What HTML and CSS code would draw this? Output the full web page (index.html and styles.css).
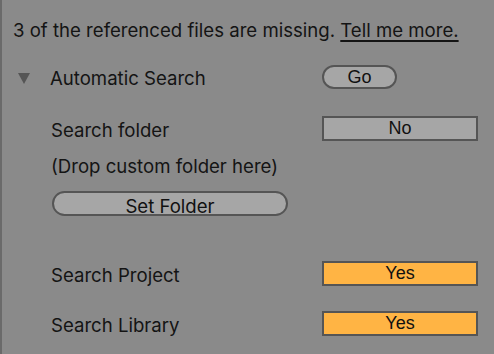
FILE: index.html
```html
<!DOCTYPE html>
<html lang="en">
<head>
    <meta charset="UTF-8">
    <meta name="viewport" content="width=device-width, initial-scale=1.0">
    <title>Missing Files</title>
    <link rel="stylesheet" href="styles.css">
</head>
<body>

    <div class="panel">
        <p class="notice">3 of the referenced files are missing. <a href="#" class="more">Tell me more.</a></p>

        <div class="row head-row">
            <span class="arrow"></span>
            <span class="label">Automatic Search</span>
            <button class="go">Go</button>
        </div>

        <div class="row folder-row">
            <span class="label">Search folder</span>
            <button class="toggle">No</button>
        </div>

        <div class="row drop-row">
            <span class="label">(Drop custom folder here)</span>
        </div>

        <div class="row set-row">
            <button class="set">Set Folder</button>
        </div>

        <div class="row project-row">
            <span class="label">Search Project</span>
            <button class="toggle on">Yes</button>
        </div>

        <div class="row library-row">
            <span class="label">Search Library</span>
            <button class="toggle on">Yes</button>
        </div>
    </div>

</body>
</html>
```
FILE: styles.css
```css
body {
    margin: 0;
    padding: 0;
    background-color: #8a8a8a;
    font-family: Inter, sans-serif;
    color: #141414;
}

.panel {
    height: 354px;
    border-left: 2px solid #6a6a6a;
    box-sizing: border-box;
}

.notice {
    margin: 0;
    padding: 15px 0 0 11px;
    height: 30px;
    line-height: 30px;
    font-size: 18.6px;
    white-space: nowrap;
}

.more {
    color: #141414;
    text-decoration: underline;
    text-decoration-thickness: 2px;
    text-underline-offset: 3px;
}

.row {
    display: flex;
    align-items: center;
    padding-left: 49px;
    padding-right: 16px;
    height: 25px;
    font-size: 18.6px;
}

.label {
    flex: 1;
    white-space: nowrap;
    padding-top: 3px;
}

.head-row {
    margin-top: 19px;
    padding-left: 16px;
}

.arrow {
    width: 0;
    height: 0;
    border-left: 6.5px solid transparent;
    border-right: 6.5px solid transparent;
    border-top: 11px solid #555555;
    margin: 3px 20px 0 0;
}

.folder-row { margin-top: 27px; }
.drop-row { margin-top: 11px; }
.set-row { margin-top: 14px; }
.project-row { margin-top: 45px; }
.library-row { margin-top: 25px; }

button {
    font-family: "Liberation Sans", Arial, sans-serif;
    font-size: 18px;
    color: #111111;
    background: #a6a6a6;
    border: 2px solid #555555;
    padding: 0;
    box-sizing: border-box;
    height: 25px;
}

.go {
    width: 75px;
    height: 24px;
    border-radius: 12px;
    margin-right: 81px;
}

.toggle {
    width: 156px;
}

.toggle.on {
    background: #ffb444;
}

.set {
    width: 236px;
    border-radius: 13px;
    margin-left: 1px;
    padding-top: 2px;
    font-family: Inter, sans-serif;
    font-size: 18.6px;
}
```
